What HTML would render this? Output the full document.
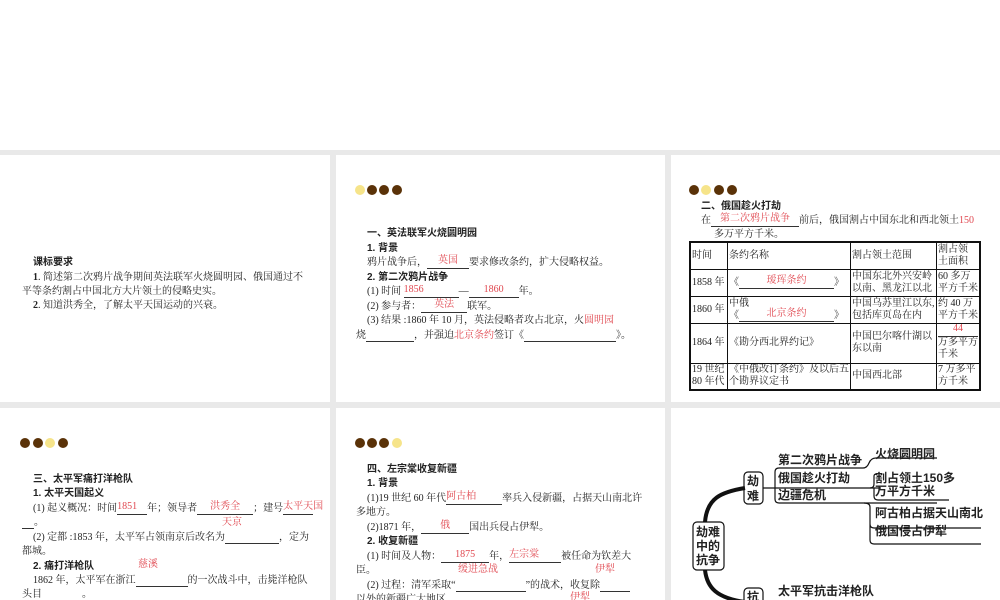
<!DOCTYPE html>
<html><head><meta charset="utf-8"><style>
body{margin:0;width:1000px;height:600px;background:#e9e9e9;position:relative;overflow:hidden;font-family:"Liberation Serif","Noto Serif CJK SC",serif;color:#222}
.p{position:absolute;background:#fff;overflow:hidden}
.t{position:absolute;font-size:10px;white-space:nowrap;line-height:12px}
.b{font-family:"Liberation Sans","Noto Sans CJK SC",sans-serif;font-weight:bold}
.r{color:#e0474f}
.u{display:inline-block;border-bottom:1px solid #333;height:11px;vertical-align:bottom;position:relative}
.u span{position:absolute;left:0;right:0;text-align:center;color:#e0474f;top:-2px}
.d{position:absolute;width:10px;height:10px;border-radius:50%;background:#5a3208}
.y{background:#f6e48a}
table{position:absolute;border-collapse:collapse;border:2px solid #111;font-size:10px;line-height:12px}
td{border:1px solid #111;padding:0 1px;vertical-align:middle}
.m{position:absolute;font-family:"Liberation Sans","Noto Sans CJK SC",sans-serif;font-weight:bold;font-size:12px;white-space:nowrap;line-height:13px}
</style></head><body>
<div class="p" style="left:0;top:0;width:1000px;height:150px"></div>
<div class="p" style="left:0;top:155px;width:330px;height:247px">
<div class="t b" style="left:33px;top:102px">课标要求</div>
<div class="t" style="left:33px;top:117px"><b>1</b>. 简述第二次鸦片战争期间英法联军火烧圆明园、俄国通过不</div>
<div class="t" style="left:22px;top:131px">平等条约割占中国北方大片领土的侵略史实。</div>
<div class="t" style="left:33px;top:145px"><b>2</b>. 知道洪秀全，了解太平天国运动的兴衰。</div>
</div>
<div class="p" style="left:336px;top:155px;width:329px;height:247px">
<div class="d y" style="left:19px;top:30px"></div><div class="d" style="left:31px;top:30px"></div><div class="d" style="left:43px;top:30px"></div><div class="d" style="left:56px;top:30px"></div>
<div class="t b" style="left:31px;top:73px">一、英法联军火烧圆明园</div>
<div class="t b" style="left:31px;top:88px">1. 背景</div>
<div class="t" style="left:31px;top:102px">鸦片战争后，<span class="u" style="width:42px"><span>英国</span></span>要求修改条约，扩大侵略权益。</div>
<div class="t b" style="left:31px;top:117px">2. 第二次鸦片战争</div>
<div class="t" style="left:31px;top:131px">(1) 时间 <span class="u" style="width:55px"><span style="text-align:left">1856</span></span>—<span class="u" style="width:50px"><span>1860</span></span>年。</div>
<div class="t" style="left:31px;top:146px">(2) 参与者：<span class="u" style="width:46px"><span>英法</span></span>联军。</div>
<div class="t" style="left:31px;top:160px">(3) 结果 :1860 年 10 月，英法侵略者攻占北京，火<span class="r">圆明园</span></div>
<div class="t" style="left:20px;top:175px">烧<span class="u" style="width:48px"></span>，并强迫<span class="r">北京条约</span>签订《<span class="u" style="width:92px"></span>》。</div>
</div>
<div class="p" style="left:671px;top:155px;width:329px;height:247px">
<div class="d" style="left:18px;top:30px"></div><div class="d y" style="left:30px;top:30px"></div><div class="d" style="left:43px;top:30px"></div><div class="d" style="left:56px;top:30px"></div>
<div class="t b" style="left:30px;top:46px">二、俄国趁火打劫</div>
<div class="t" style="left:30px;top:60px">在<span class="u" style="width:88px"><span>第二次鸦片战争</span></span>前后，俄国割占中国东北和西北领土<span class="r">150</span></div>
<div class="t" style="left:43px;top:74px">多万平方千米。</div>
<table style="left:18px;top:86px;width:292px">
<tr style="height:27px"><td style="width:34px">时间</td><td style="width:120px">条约名称</td><td style="width:83px">割占领土范围</td><td>割占领<br>土面积</td></tr>
<tr style="height:27px"><td>1858 年</td><td>《<span class="u" style="width:95px"><span>瑷珲条约</span></span>》</td><td>中国东北外兴安岭<br>以南、黑龙江以北</td><td>60 多万<br>平方千米</td></tr>
<tr style="height:27px"><td>1860 年</td><td>中俄<br>《<span class="u" style="width:95px"><span>北京条约</span></span>》</td><td>中国乌苏里江以东,<br>包括库页岛在内</td><td>约 40 万<br>平方千米</td></tr>
<tr style="height:40px"><td>1864 年</td><td>《勘分西北界约记》</td><td>中国巴尔喀什湖以<br>东以南</td><td><span class="u" style="width:40px"><span>44</span></span><br>万多平方<br>千米</td></tr>
<tr style="height:27px"><td>19 世纪<br>80 年代</td><td>《中俄改订条约》及以后五<br>个勘界议定书</td><td>中国西北部</td><td>7 万多平<br>方千米</td></tr>
</table>
</div>
<div class="p" style="left:0;top:408px;width:330px;height:192px">
<div class="d" style="left:20px;top:30px"></div><div class="d" style="left:33px;top:30px"></div><div class="d y" style="left:45px;top:30px"></div><div class="d" style="left:58px;top:30px"></div>
<div class="t b" style="left:33px;top:66px">三、太平军痛打洋枪队</div>
<div class="t b" style="left:33px;top:80px">1. 太平天国起义</div>
<div class="t" style="left:33px;top:95px">(1) 起义概况：时间<span class="u" style="width:30px"><span style="text-align:left">1851</span></span>年；领导者<span class="u" style="width:56px"><span>洪秀全</span></span>；建号<span class="u" style="width:30px"><span>太平天国</span></span></div>
<div class="t" style="left:22px;top:109px"><span class="u" style="width:12px"></span>。</div>
<div class="t r" style="left:222px;top:109px">天京</div>
<div class="t" style="left:33px;top:124px">(2) 定都 :1853 年，太平军占领南京后改名为<span class="u" style="width:54px"></span>，定为</div>
<div class="t" style="left:22px;top:138px">都城。</div>
<div class="t b" style="left:33px;top:153px">2. 痛打洋枪队</div>
<div class="t r" style="left:138px;top:151px">慈溪</div>
<div class="t" style="left:33px;top:167px">1862 年，太平军在浙江<span class="u" style="width:52px"></span>的一次战斗中，击毙洋枪队</div>
<div class="t" style="left:22px;top:181px">头目<span class="u" style="width:40px"></span>。</div>
</div>
<div class="p" style="left:336px;top:408px;width:329px;height:192px">
<div class="d" style="left:19px;top:30px"></div><div class="d" style="left:31px;top:30px"></div><div class="d" style="left:43px;top:30px"></div><div class="d y" style="left:56px;top:30px"></div>
<div class="t b" style="left:31px;top:56px">四、左宗棠收复新疆</div>
<div class="t b" style="left:31px;top:70px">1. 背景</div>
<div class="t" style="left:31px;top:85px">(1)19 世纪 60 年代<span class="u" style="width:56px"><span style="text-align:left">阿古柏</span></span>率兵入侵新疆，占据天山南北许</div>
<div class="t" style="left:20px;top:99px">多地方。</div>
<div class="t" style="left:31px;top:114px">(2)1871 年，<span class="u" style="width:48px"><span>俄</span></span>国出兵侵占伊犁。</div>
<div class="t b" style="left:31px;top:128px">2. 收复新疆</div>
<div class="t" style="left:31px;top:143px">(1) 时间及人物：<span class="u" style="width:48px"><span>1875</span></span>年，<span class="u" style="width:52px"><span style="text-align:left">左宗棠</span></span>被任命为钦差大</div>
<div class="t" style="left:20px;top:157px">臣。</div>
<div class="t r" style="left:122px;top:156px">缓进急战</div>
<div class="t r" style="left:259px;top:156px">伊犁</div>
<div class="t" style="left:31px;top:172px">(2) 过程：清军采取“<span class="u" style="width:70px"></span>”的战术，收复除<span class="u" style="width:30px"></span></div>
<div class="t" style="left:20px;top:186px">以外的新疆广大地区。</div>
<div class="t r" style="left:234px;top:184px">伊犁</div>
</div>
<div class="p" style="left:671px;top:408px;width:329px;height:192px">
<svg width="329" height="192" style="position:absolute;left:0;top:0" fill="none" stroke="#111">
<path d="M34 114 C36 90 50 84 74 80" stroke-width="4"/>
<path d="M34 162 C36 180 46 190 74 194" stroke-width="4"/>
<rect x="22" y="114" width="31" height="48" rx="4" stroke-width="1.2"/>
<rect x="73" y="64" width="19" height="32" rx="4" stroke-width="1.2"/>
<rect x="73" y="180" width="19" height="30" rx="4" stroke-width="1.2"/>
<path d="M92 80 H210 M104 80 V64 Q104 60 108 60 H192 Q196 60 198 55 Q200 50 205 50 H266" stroke-width="1.2"/>
<path d="M104 80 V91 Q104 95 108 95 H266" stroke-width="1.2"/>
<path d="M199 80 Q203 80 203 76 V68 Q203 66 206 66 M203 80 V88 Q203 92 207 92 H278" stroke-width="1.2"/>
<path d="M193 95 Q199 95 199 99 V116 Q199 120 203 120 H310 M199 116 V132 Q199 136 203 136 H310" stroke-width="1.2"/>
<path d="M104 197 H200" stroke-width="1.2"/>
</svg>
<div class="m" style="left:25px;top:117px;line-height:14px">劫难<br>中的<br>抗争</div>
<div class="m" style="left:76px;top:66px;line-height:15px">劫<br>难</div>
<div class="m" style="left:76px;top:183px">抗</div>
<div class="m" style="left:107px;top:46px">第二次鸦片战争</div>
<div class="m" style="left:107px;top:64px">俄国趁火打劫</div>
<div class="m" style="left:107px;top:81px">边疆危机</div>
<div class="m" style="left:204px;top:40px">火烧圆明园</div>
<div class="m" style="left:204px;top:64px">割占领土150多</div>
<div class="m" style="left:204px;top:77px">万平方千米</div>
<div class="m" style="left:204px;top:99px">阿古柏占据天山南北</div>
<div class="m" style="left:204px;top:117px">俄国侵占伊犁</div>
<div class="m" style="left:107px;top:177px">太平军抗击洋枪队</div>
</div>
</body></html>
